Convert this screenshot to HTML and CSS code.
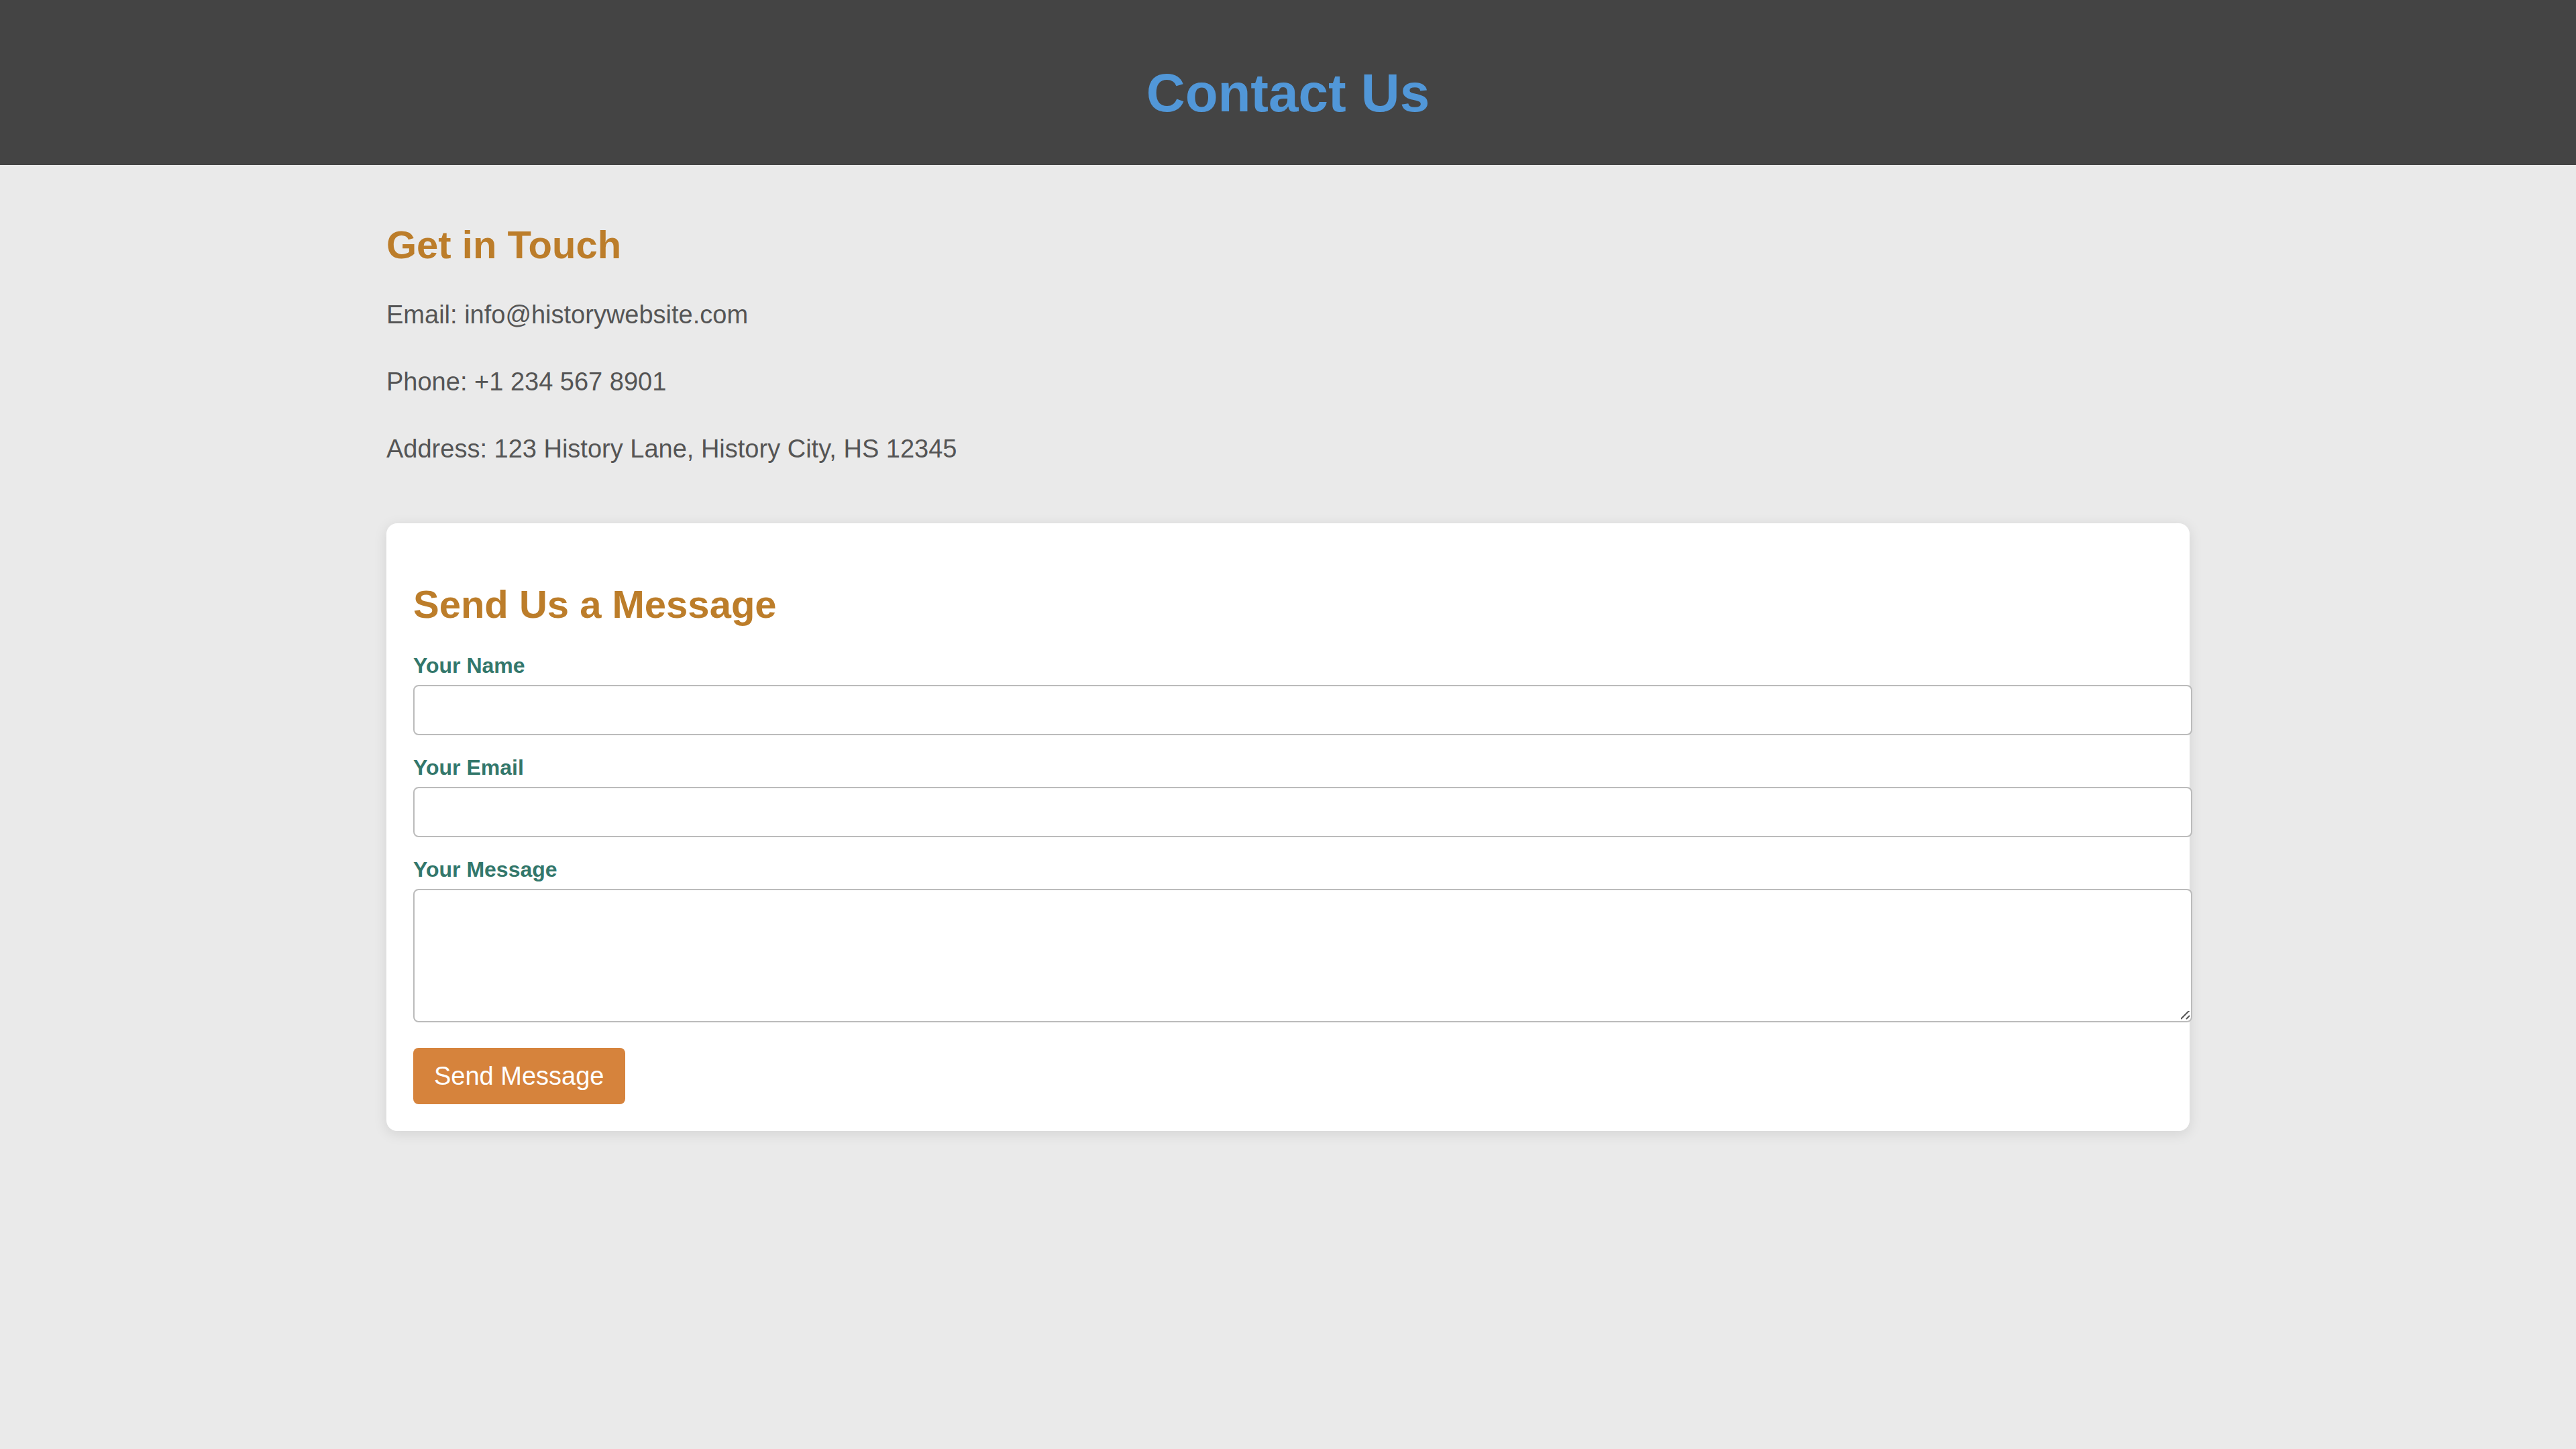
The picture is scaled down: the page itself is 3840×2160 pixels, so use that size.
FILE: index.html
```html
<!DOCTYPE html>
<html lang="en">
<head>
<meta charset="utf-8">
<meta name="viewport" content="width=device-width, initial-scale=1">
<title>Contact Us</title>
<link rel="stylesheet" href="styles.css">
</head>
<body>
<header class="page-header">
  <h1 class="page-title">Contact Us</h1>
</header>
<main class="content">
  <section class="contact-info">
    <h2 class="section-title">Get in Touch</h2>
    <p class="contact-line">Email: info@historywebsite.com</p>
    <p class="contact-line">Phone: +1 234 567 8901</p>
    <p class="contact-line">Address: 123 History Lane, History City, HS 12345</p>
  </section>
  <section class="message-card">
    <h2 class="section-title">Send Us a Message</h2>
    <form class="message-form">
      <label class="field-label" for="name">Your Name</label>
      <input class="field" type="text" id="name" name="name">
      <label class="field-label" for="email">Your Email</label>
      <input class="field" type="email" id="email" name="email">
      <label class="field-label" for="message">Your Message</label>
      <textarea class="field field-message" id="message" name="message"></textarea>
      <button class="submit" type="submit">Send Message</button>
    </form>
  </section>
</main>
</body>
</html>
```
FILE: styles.css
```css
body {
  margin: 0;
  background: #eaeaea;
  color: #555;
  font-family: Arial, "Liberation Sans", sans-serif;
  font-size: 32px;
}

.page-header {
  padding: 93px 40px 61px;
  background: #444;
  text-align: center;
}

.page-title {
  margin: 0;
  color: #5197d8;
  font-size: 80px;
  line-height: 92px;
}

.content {
  width: 70%;
  margin: 0 auto;
  padding: 40px 0;
}

.contact-info {
  padding-top: 46px;
  margin-bottom: 80px;
}

.section-title {
  margin: 0 0 40px;
  color: #bc7d2a;
  font-size: 58px;
  line-height: 66px;
}

.contact-line {
  margin: 0 0 38px;
  font-size: 38px;
  line-height: 62px;
}

.message-card {
  padding: 88px 40px 40px;
  border-radius: 16px;
  background: #fff;
  box-shadow: 0 4px 20px rgba(0, 0, 0, 0.1);
}

.field-label {
  display: block;
  margin-bottom: 10px;
  color: #33776b;
  font-weight: bold;
  line-height: 37px;
}

/* Fields fill the card and add their own padding on top of that width. */
.field {
  display: block;
  box-sizing: content-box;
  width: 100%;
  height: 31px;
  margin: 0 0 30px;
  padding: 20px;
  border: 2px solid #bbb;
  border-radius: 8px;
  background: #fff;
  font: inherit;
}

.field-message {
  height: 155px;
  margin-bottom: 38px;
  resize: vertical;
}

.field-message::-webkit-resizer {
  background: url("data:image/svg+xml,%3Csvg xmlns='http://www.w3.org/2000/svg' width='15' height='15'%3E%3Cpath d='M0 12L13 -1M8 12L13 7' stroke='%23555' stroke-width='2' fill='none'/%3E%3C/svg%3E") no-repeat;
}

.submit {
  display: block;
  padding: 20px 31px;
  border: 0;
  border-radius: 8px;
  background: #d6833c;
  color: #fff;
  font-family: inherit;
  font-size: 38px;
  line-height: 44px;
  cursor: pointer;
}
```
